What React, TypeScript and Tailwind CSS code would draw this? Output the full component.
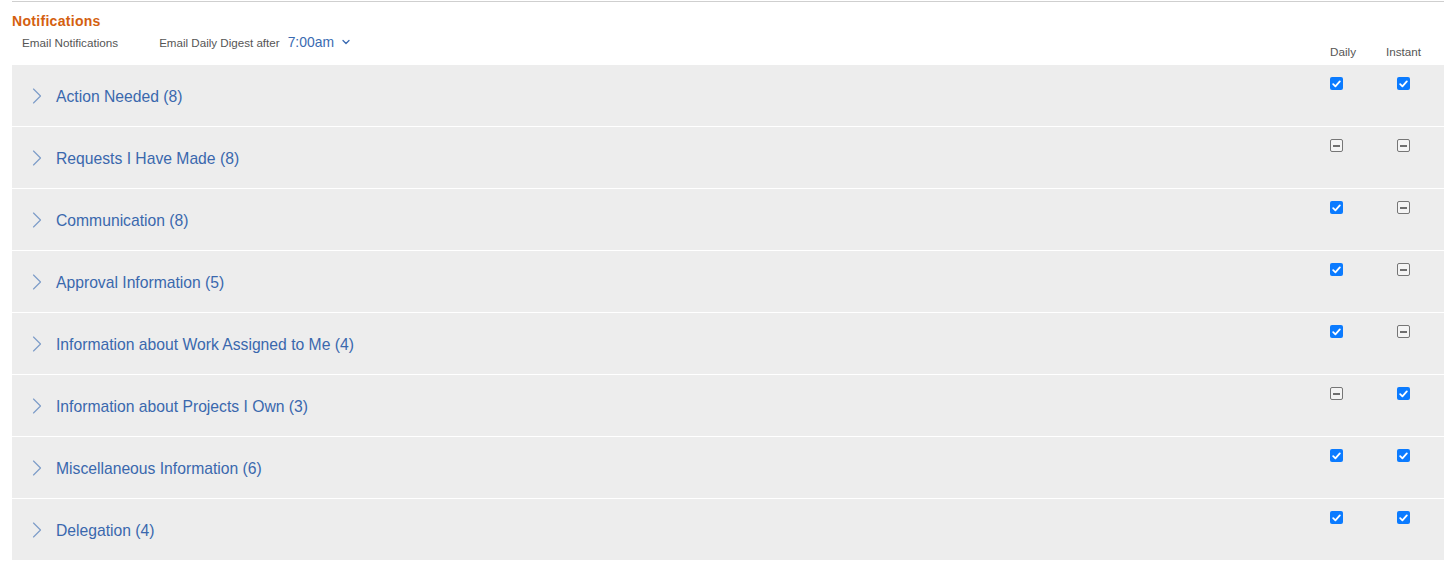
import { ChevronDown, ChevronRight } from 'lucide-react'

type State = 'on' | 'mixed'

const GROUPS: { label: string; daily: State; instant: State }[] = [
  { label: 'Action Needed (8)', daily: 'on', instant: 'on' },
  { label: 'Requests I Have Made (8)', daily: 'mixed', instant: 'mixed' },
  { label: 'Communication (8)', daily: 'on', instant: 'mixed' },
  { label: 'Approval Information (5)', daily: 'on', instant: 'mixed' },
  { label: 'Information about Work Assigned to Me (4)', daily: 'on', instant: 'mixed' },
  { label: 'Information about Projects I Own (3)', daily: 'mixed', instant: 'on' },
  { label: 'Miscellaneous Information (6)', daily: 'on', instant: 'on' },
  { label: 'Delegation (4)', daily: 'on', instant: 'on' },
]

function Box({ state }: { state: State }) {
  if (state === 'on') {
    return (
      <span className="flex h-[13px] w-[13px] items-center justify-center rounded-[2px] bg-[#0b7bff]">
        <svg width="9" height="8" viewBox="0 0 9 8" fill="none">
          <path d="M1.2 4.2 3.4 6.3 7.8 1.4" stroke="white" strokeWidth="1.8" strokeLinecap="round" strokeLinejoin="round" />
        </svg>
      </span>
    )
  }
  return (
    <span className="flex h-[13px] w-[13px] items-center justify-center rounded-[2px] border border-[#767676] bg-[#f4f4f4]">
      <span className="h-[2px] w-[7px] bg-[#6f6f6f]" />
    </span>
  )
}

export default function App() {
  return (
    <div className="min-h-[563px] bg-white px-[12px] font-['Liberation_Sans',Arial,sans-serif]">
      <div className="mt-[1px] h-px bg-[#cfcfcf]" />

      <div className="pt-[11px] text-[14px] font-bold leading-[16px] tracking-[0.3px] text-[#d4600f]">
        Notifications
      </div>

      <div className="flex h-[36px] items-start">
        <div className="flex items-center pt-[3px]">
          <span className="ml-[10px] text-[11.7px] text-[#555]">Email Notifications</span>
          <span className="ml-[41px] text-[11.6px] text-[#555]">Email Daily Digest after</span>
          <button className="ml-[8px] flex items-center text-[13.9px] text-[#3a6ab1]">
            7:00am
            <ChevronDown className="ml-[6px] h-[12px] w-[12px]" strokeWidth={2.6} />
          </button>
        </div>
        <div className="ml-auto flex pt-[14px] text-[11.7px] text-[#555]">
          <span className="w-[50px] pl-[10px]">Daily</span>
          <span className="w-[67px] text-center">Instant</span>
          <span className="w-[7px]" />
        </div>
      </div>

      <div className="flex flex-col gap-px">
        {GROUPS.map((g) => (
          <div key={g.label} className="flex h-[61px] items-stretch bg-[#ededed]">
            <div className="flex flex-1 items-center">
              <ChevronRight className="ml-[10.5px] h-[28px] w-[28px] text-[#7d9cc8]" strokeWidth={1} />
              <span className="ml-[5.5px] mt-[2px] text-[15.7px] text-[#3a68ad]">{g.label}</span>
            </div>
            <div className="flex pt-[12px]">
              <div className="w-[50px] pl-[10px]">
                <Box state={g.daily} />
              </div>
              <div className="flex w-[67px] justify-center">
                <Box state={g.instant} />
              </div>
              <div className="w-[7px]" />
            </div>
          </div>
        ))}
      </div>
    </div>
  )
}
